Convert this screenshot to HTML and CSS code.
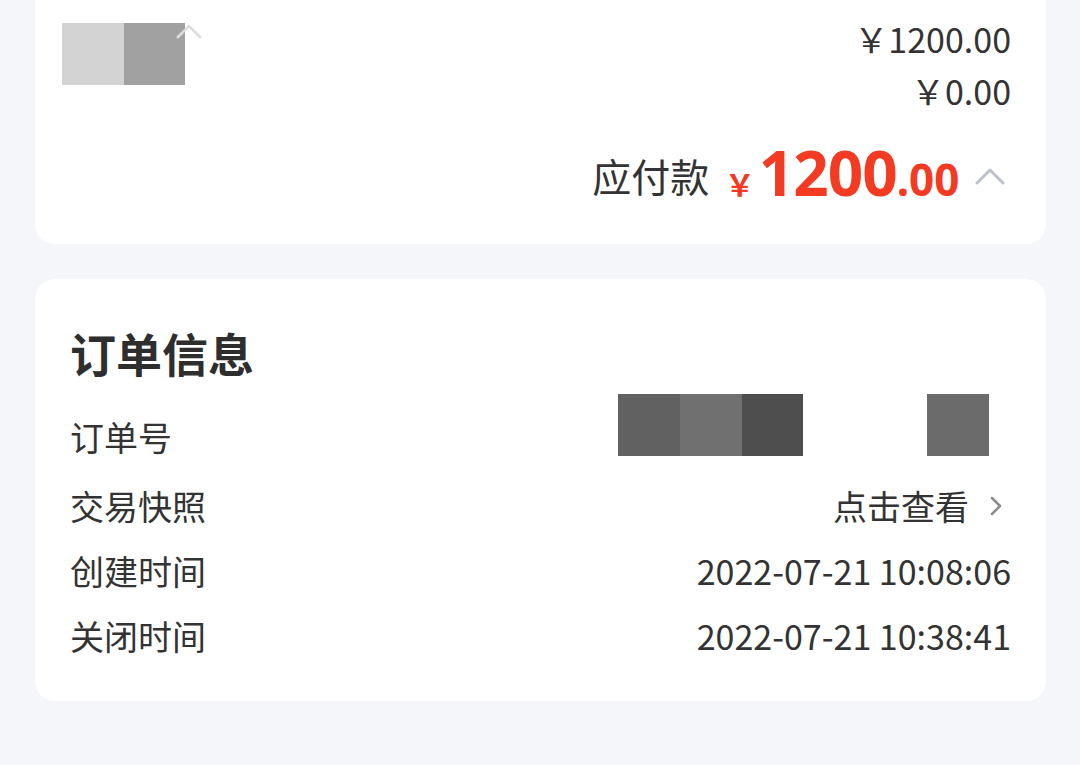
FILE: index.html
```html
<!DOCTYPE html>
<html lang="zh-CN">
<head>
<meta charset="utf-8">
<link rel="stylesheet" href="styles.css">
</head>
<body>
<div class="page">
  <section class="card card-price">
    <div class="price-top">
      <div class="thumb">
        <span class="blk b1"></span><span class="blk b2"></span>
        <svg class="faint-chev" width="30" height="20" viewBox="0 0 30 20"><path d="M3 17 L15 5 L27 17" fill="none" stroke="#dcdcdc" stroke-width="2.5"/></svg>
      </div>
      <div class="amounts">
        <div class="amt">￥1200.00</div>
        <div class="amt">￥0.00</div>
      </div>
    </div>
    <div class="pay-row">
      <span class="pay-label">应付款</span>
      <span class="pay-amount"><span class="pay-sym">￥</span><span class="pay-int">1200</span><span class="pay-dec">.00</span></span>
      <svg class="up-chev" width="30" height="20" viewBox="0 0 30 20"><path d="M2 17 L15 4 L28 17" fill="none" stroke="#bdc1c9" stroke-width="3" stroke-linecap="round" stroke-linejoin="round"/></svg>
    </div>
  </section>

  <section class="card card-info">
    <h2 class="info-title">订单信息</h2>
    <div class="row row-first">
      <span class="label">订单号</span>
      <div class="order-blocks">
        <span class="blk c1"></span><span class="blk c2"></span><span class="blk c3"></span>
        <span class="blk c4"></span>
      </div>
    </div>
    <div class="row">
      <span class="label">交易快照</span>
      <span class="value link">点击查看<svg class="right-chev" width="14" height="22" viewBox="0 0 14 22"><path d="M3 3 L11 11 L3 19" fill="none" stroke="#8c8c8c" stroke-width="2.5" stroke-linecap="round" stroke-linejoin="round"/></svg></span>
    </div>
    <div class="row">
      <span class="label">创建时间</span>
      <span class="value num">2022-07-21 10:08:06</span>
    </div>
    <div class="row">
      <span class="label">关闭时间</span>
      <span class="value num">2022-07-21 10:38:41</span>
    </div>
  </section>
</div>
</body>
</html>
```

FILE: styles.css
```css
* { box-sizing: border-box; }
html, body {
  margin: 0;
  padding: 0;
  background: #f5f6fa;
  font-family: "Noto Sans CJK SC", "Noto Sans", sans-serif;
  color: #333333;
}
.page {
  width: 1080px;
  height: 765px;
  padding: 0 34px 0 35px;
  display: flex;
  flex-direction: column;
  gap: 35px;
}
.card {
  background: #ffffff;
  border-radius: 20px;
}
.card-price {
  border-radius: 0 0 20px 20px;
  height: 244px;
  padding: 0 35px 0 27px;
}
.price-top {
  display: flex;
  justify-content: space-between;
  height: 122px;
}
.thumb {
  position: relative;
  display: flex;
  margin-top: 23px;
  height: 62px;
}
.blk { display: block; height: 62px; }
.b1 { width: 62px; background: #d3d3d3; }
.b2 { width: 61px; background: #a1a1a1; }
.faint-chev { position: absolute; left: 112px; top: -2px; }
.amounts {
  text-align: right;
  padding-top: 13px;
  font-size: 34px;
  line-height: 52px;
}
.pay-row {
  text-align: right;
  height: 90px;
  padding-top: 5px;
  line-height: 90px;
  white-space: nowrap;
}
.pay-label { font-size: 39px; margin-right: 12px; }
.pay-amount { vertical-align: -4px; color: #f33a22; font-weight: 700; }
.pay-sym { font-size: 30px; margin-right: 4px; }
.pay-int { font-size: 62px; font-family: "Noto Sans", sans-serif; letter-spacing: -1px; }
.pay-dec { font-size: 44px; font-family: "Noto Sans", sans-serif; }
.up-chev { margin-left: 12px; margin-right: 6px; vertical-align: 6px; }

.card-info {
  height: 422px;
  padding: 43px 35px 0 35px;
}
.info-title {
  margin: 0;
  font-size: 46px;
  font-weight: 700;
  line-height: 60px;
  color: #2e2e2e;
}
.row {
  display: flex;
  justify-content: space-between;
  align-items: center;
  height: 65px;
}
.row-first {
  margin-top: 12px;
  height: 79px;
  align-items: flex-start;
}
.row-first .label { line-height: 65px; margin-top: 10px; }
.label { font-size: 34px; }
.order-blocks { display: flex; margin-right: 22px; }
.c1 { width: 62px; background: #616161; }
.c2 { width: 62px; background: #707070; }
.c3 { width: 61px; background: #4e4e4e; }
.c4 { width: 62px; background: #6b6b6b; margin-left: 124px; }
.value { font-size: 34px; }
.num { font-size: 34px; }
.link { display: flex; align-items: center; }
.right-chev { margin-left: 20px; margin-right: 8px; }
```
